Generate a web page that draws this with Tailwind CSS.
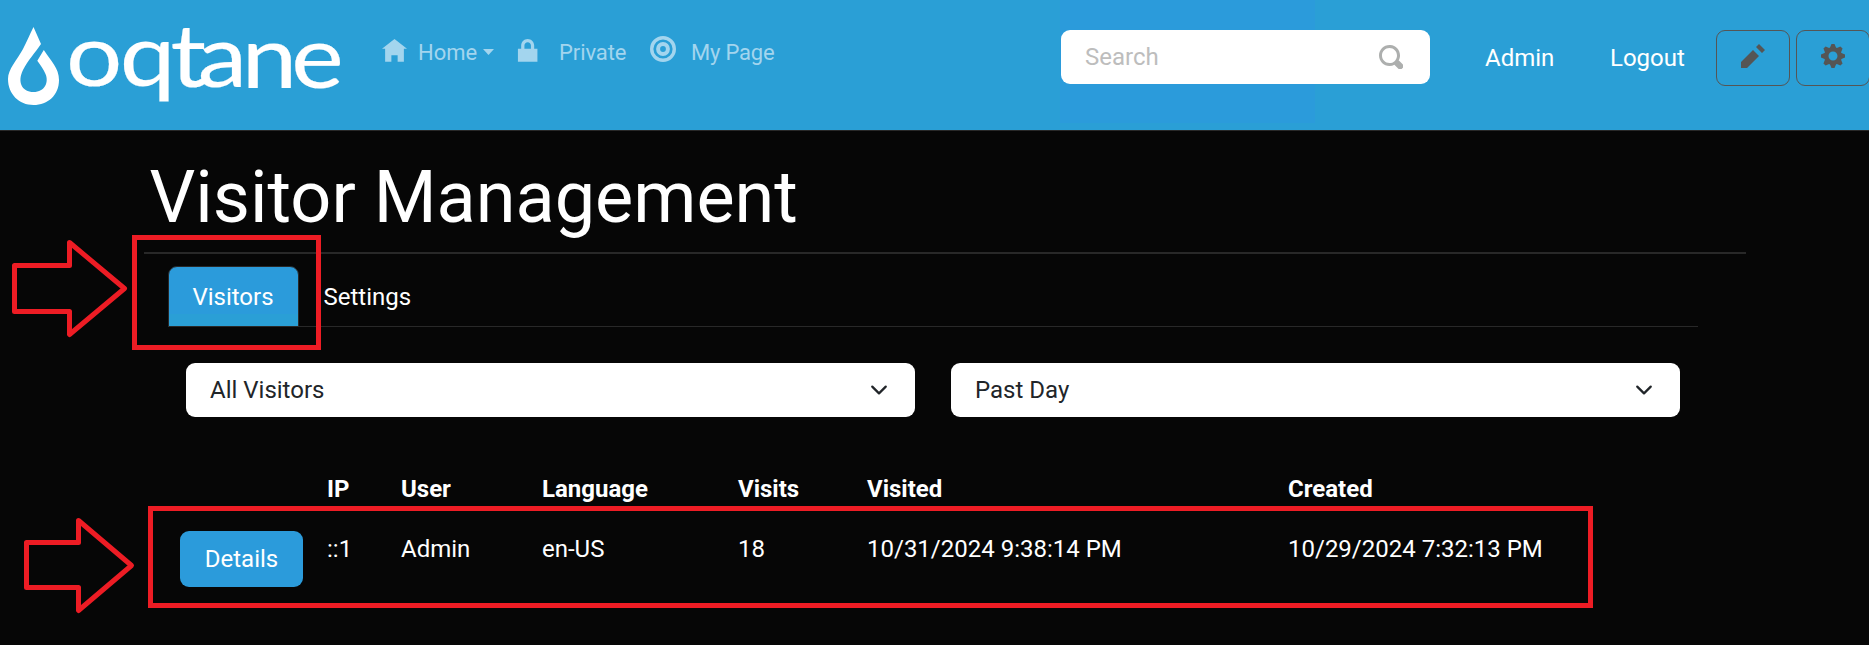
<!DOCTYPE html>
<html lang="en">
<head>
<meta charset="utf-8">
<title>Visitor Management</title>
<script src="https://cdn.jsdelivr.net/npm/@tailwindcss/browser@4"></script>
</head>
<body class="relative h-[645px] w-[1869px] overflow-hidden bg-[#060606] font-['Roboto',sans-serif] text-2xl leading-9 text-white">
<header class="flex h-[131px] items-start border-b border-[#282828] bg-[#2a9fd6] bg-[linear-gradient(#2b9bdb,#2b9bdb)] bg-[length:255px_123px] bg-[position:1060px_0] bg-no-repeat">
  <a class="block h-[130px] w-[382px] shrink-0" aria-label="oqtane">
    <svg class="h-[130px] w-[380px] overflow-visible" viewBox="0 0 380 130" fill="#fff">
      <path d="M33.500 27 L41 44 C35 53 28 60 23 70 C17 82 22 92 33.500 92 C45 92 49 82 45.500 74 C43.500 69 40.500 65 37.300 60.700 L43.800 50 C51 61 59 68 59 80 C59 95 48 105 33.500 105 C19 105 8 94 8 79 C8 69 17 60 23 49 C27 41 30 34 33.500 27 Z"/>
      <text transform="scale(1.13 1)" y="86 86 87 87.500 88 88.500" x="58.300 106 150.800 175 214 257.800" font-family="Lato, sans-serif" font-size="88" stroke="#fff" stroke-width=".2">oqtane</text>
    </svg>
  </a>
  <nav class="flex w-[679px] shrink-0 items-start pt-[35px] text-[22px] text-[#a3d5ee]">
    <a class="flex w-[133px] items-start">
      <svg class="mt-[4px] h-[26px] w-[25px]" viewBox="0 0 8 8" preserveAspectRatio="none" fill="currentColor"><path d="M4 0l-4 3h1v4h2v-2h2v2h2v-4.030l1 .03-4-3z"/></svg>
      <span class="ml-[11px]">Home</span>
      <svg class="mt-[14px] ml-[6px] h-[6px] w-[11px]" viewBox="0 0 11 6" fill="currentColor"><path d="M0 0h11L5.500 6z"/></svg>
    </a>
    <a class="flex w-[135px] items-start">
      <svg class="mt-[4px] h-[26px] w-[26px]" viewBox="0 0 8 8" fill="currentColor"><path transform="translate(-.1)" d="M4 0c-1.100 0-2 .9-2 2v1h-1v4h6v-4h-1v-1c0-1.100-.9-2-2-2zm0 1c.56 0 1 .44 1 1v1h-2v-1c0-.56.44-1 1-1z"/></svg>
      <span class="ml-[18px] tracking-[-.1px]">Private</span>
    </a>
    <a class="flex items-start">
      <svg class="mt-[1px] h-[26px] w-[26px]" viewBox="0 0 26 26" fill="none" stroke="currentColor"><circle cx="13" cy="13" r="11.300" stroke-width="3.400"/><circle cx="13" cy="13" r="4.900" stroke-width="4"/></svg>
      <span class="ml-[15px] tracking-[-.2px]">My Page</span>
    </a>
  </nav>
  <div class="mt-[30px] flex h-[54px] w-[369px] shrink-0 items-center justify-between rounded-[9px] bg-white pr-[27px] pl-6 text-[#bdbdbd]">
    <span>Search</span>
    <svg class="h-6 w-6" viewBox="0 0 8 8" fill="#adafae"><path d="M3.500 0c-1.930 0-3.500 1.570-3.500 3.500s1.570 3.500 3.500 3.500c.59 0 1.170-.14 1.660-.41a1 1 0 0 0 .13.13l1 1a1.020 1.020 0 1 0 1.440-1.440l-1-1a1 1 0 0 0-.16-.13c.27-.49.44-1.060.44-1.660 0-1.930-1.550-3.500-3.500-3.500zm0 1c1.390 0 2.500 1.110 2.500 2.500 0 .66-.24 1.270-.66 1.720l-.03.03a1 1 0 0 0-.13.13c-.44.4-1.040.63-1.690.63-1.390 0-2.500-1.110-2.500-2.500s1.110-2.500 2.500-2.500z"/></svg>
  </div>
  <a class="mt-10 ml-[55px] w-[125px] shrink-0">Admin</a>
  <a class="mt-10 w-[106px] shrink-0">Logout</a>
  <button class="mt-[30px] flex h-14 w-[74px] shrink-0 justify-center rounded-[9px] border border-[#555] pt-[13px]" aria-label="Edit">
    <svg class="h-6 w-6" viewBox="0 0 8 8" fill="#555"><path d="M6 0l-1 1 2 2 1-1-2-2zm-2 2l-4 4v2h2l4-4-2-2z"/></svg>
  </button>
  <button class="mt-[30px] ml-[6px] flex h-14 w-[74px] shrink-0 justify-center rounded-[9px] border border-[#555] pt-[13px]" aria-label="Settings">
    <svg class="h-6 w-6" viewBox="0 0 8 8" fill="#555"><path d="M3.500 0l-.5 1.190c-.1.03-.19.08-.28.13l-1.190-.5-.72.72.5 1.190c-.05.1-.09.18-.13.28l-1.190.5v1l1.190.5c.04.1.08.18.13.28l-.5 1.190.72.72 1.190-.5c.09.04.18.09.28.13l.5 1.190h1l.5-1.190c.09-.04.19-.08.28-.13l1.190.5.72-.72-.5-1.190c.04-.09.09-.19.13-.28l1.190-.5v-1l-1.190-.5c-.03-.09-.08-.19-.13-.28l.5-1.190-.72-.72-1.190.5c-.09-.04-.19-.09-.28-.13l-.5-1.190h-1zm.5 2.500c.83 0 1.500.67 1.500 1.500s-.67 1.500-1.500 1.500-1.500-.67-1.500-1.500.67-1.500 1.500-1.500z"/></svg>
  </button>
</header>

<main class="ml-36 w-[1602px]">
  <h1 class="h-[121px] pt-[24px] pl-[5.500px] text-[72px] leading-[86px]">Visitor Management</h1>
  <hr class="h-0.5 border-0 bg-[#282828]">
  <div class="mt-3 ml-6 flex h-[61px] w-[1530px] border-b border-[#282828]">
    <a class="h-[61px] w-[131px] rounded-t-[9px] border border-[#282828] bg-[#2b9bdb] bg-linear-to-b from-[#2b9bdb] from-80% to-[#2a9fd6] to-80% pt-[12px] pr-px text-center">Visitors</a>
    <a class="pt-[13px] pl-[24.500px]">Settings</a>
  </div>
  <div class="mt-9 ml-[42px] flex w-[1494px] gap-9 text-[#212529]">
    <div class="flex h-[54px] flex-1 items-center justify-between rounded-[9px] bg-white pr-[27px] pl-6">
      <span>All Visitors</span>
      <svg class="h-[18px] w-[18px]" viewBox="0 0 16 16" fill="none" stroke="#212529" stroke-width="2" stroke-linecap="round" stroke-linejoin="round"><path d="m2 5 6 6 6-6"/></svg>
    </div>
    <div class="flex h-[54px] flex-1 items-center justify-between rounded-[9px] bg-white pr-[27px] pl-6">
      <span>Past Day</span>
      <svg class="h-[18px] w-[18px]" viewBox="0 0 16 16" fill="none" stroke="#212529" stroke-width="2" stroke-linecap="round" stroke-linejoin="round"><path d="m2 5 6 6 6-6"/></svg>
    </div>
  </div>
  <div class="mt-[54px] ml-9 grid grid-cols-[147px_74px_141px_196px_129px_421px_280px] gap-y-6">
    <b></b><b>IP</b><b>User</b><b>Language</b><b>Visits</b><b>Visited</b><b>Created</b>
    <button class="h-14 w-[123px] rounded-[9px] bg-[#2b9bdb]">Details</button><span>::1</span><span>Admin</span><span>en-US</span><span>18</span><span>10/31/2024 9:38:14 PM</span><span>10/29/2024 7:32:13 PM</span>
  </div>
</main>

<!-- Callouts over the page -->
<svg class="pointer-events-none absolute top-0 left-0 h-[645px] w-[1869px]" viewBox="0 0 1869 645" fill="none" stroke="#ed1c24" stroke-width="5">
  <rect x="134.500" y="237.500" width="184" height="110"/>
  <rect x="150.500" y="508.500" width="1440" height="97"/>
  <path stroke-width="5" stroke-linejoin="round" d="M14.500 265.500H69.500V242.500L124.500 288.500L69.500 334.500V311.500H14.500Z"/>
  <path stroke-width="5" stroke-linejoin="round" d="M26.500 542.500H78.500V520.500L131.500 565.500L78.500 610.500V587.500H26.500Z"/>
</svg>
</body>
</html>
